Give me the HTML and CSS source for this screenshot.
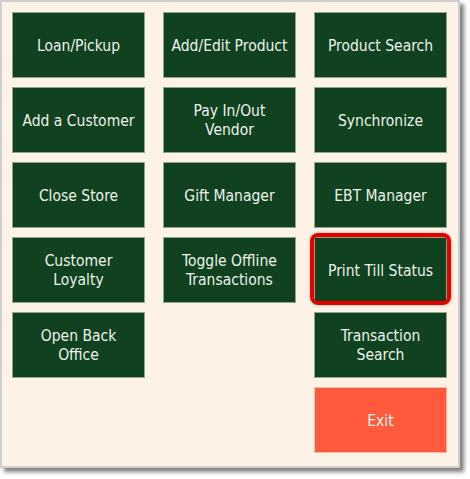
FILE: index.html
```html
<!DOCTYPE html>
<html>
<head>
<meta charset="utf-8">
<link rel="stylesheet" href="styles.css">
</head>
<body>
<div class="frame">
  <div class="col">
    <div class="btn">Loan/Pickup</div>
    <div class="btn">Add a Customer</div>
    <div class="btn">Close Store</div>
    <div class="btn">Customer<br>Loyalty</div>
    <div class="btn">Open Back<br>Office</div>
  </div>
  <div class="col">
    <div class="btn">Add/Edit Product</div>
    <div class="btn">Pay In/Out<br>Vendor</div>
    <div class="btn">Gift Manager</div>
    <div class="btn">Toggle Offline<br>Transactions</div>
  </div>
  <div class="col">
    <div class="btn">Product Search</div>
    <div class="btn">Synchronize</div>
    <div class="btn">EBT Manager</div>
    <div class="btn highlight">Print Till Status</div>
    <div class="btn">Transaction<br>Search</div>
    <div class="btn exit">Exit</div>
  </div>
</div>
</body>
</html>
```
FILE: styles.css
```css
html, body {
  margin: 0;
  padding: 0;
  background: #ffffff;
}
body {
  width: 470px;
  height: 479px;
  font-family: "DejaVu Sans Condensed", "DejaVu Sans", sans-serif;
}
.frame {
  box-sizing: border-box;
  width: 460px;
  height: 468px;
  background: #fdf2e6;
  border: 2px solid #cfcfcf;
  box-shadow: 4px 4px 4px rgba(0, 0, 0, 0.5);
  padding: 10px 0 0 10px;
  display: flex;
  gap: 18px;
}
.col {
  display: flex;
  flex-direction: column;
  gap: 9px;
  width: 133px;
}
.btn {
  position: relative;
  box-sizing: border-box;
  height: 66px;
  padding-top: 2px;
  background: #10421f;
  border: 1px solid #8fa48c;
  color: #eef1ec;
  font-size: 15.5px;
  line-height: 19px;
  display: flex;
  align-items: center;
  justify-content: center;
  text-align: center;
}
.exit {
  background: #ff5a3b;
  border-color: #f8b9a6;
}
.highlight::after {
  content: "";
  position: absolute;
  left: -5px;
  top: -5px;
  right: -5px;
  bottom: -3px;
  border: 4px solid #e60000;
  border-radius: 8px;
  box-shadow: 0 0 3px rgba(0, 0, 0, 0.35);
}
```
